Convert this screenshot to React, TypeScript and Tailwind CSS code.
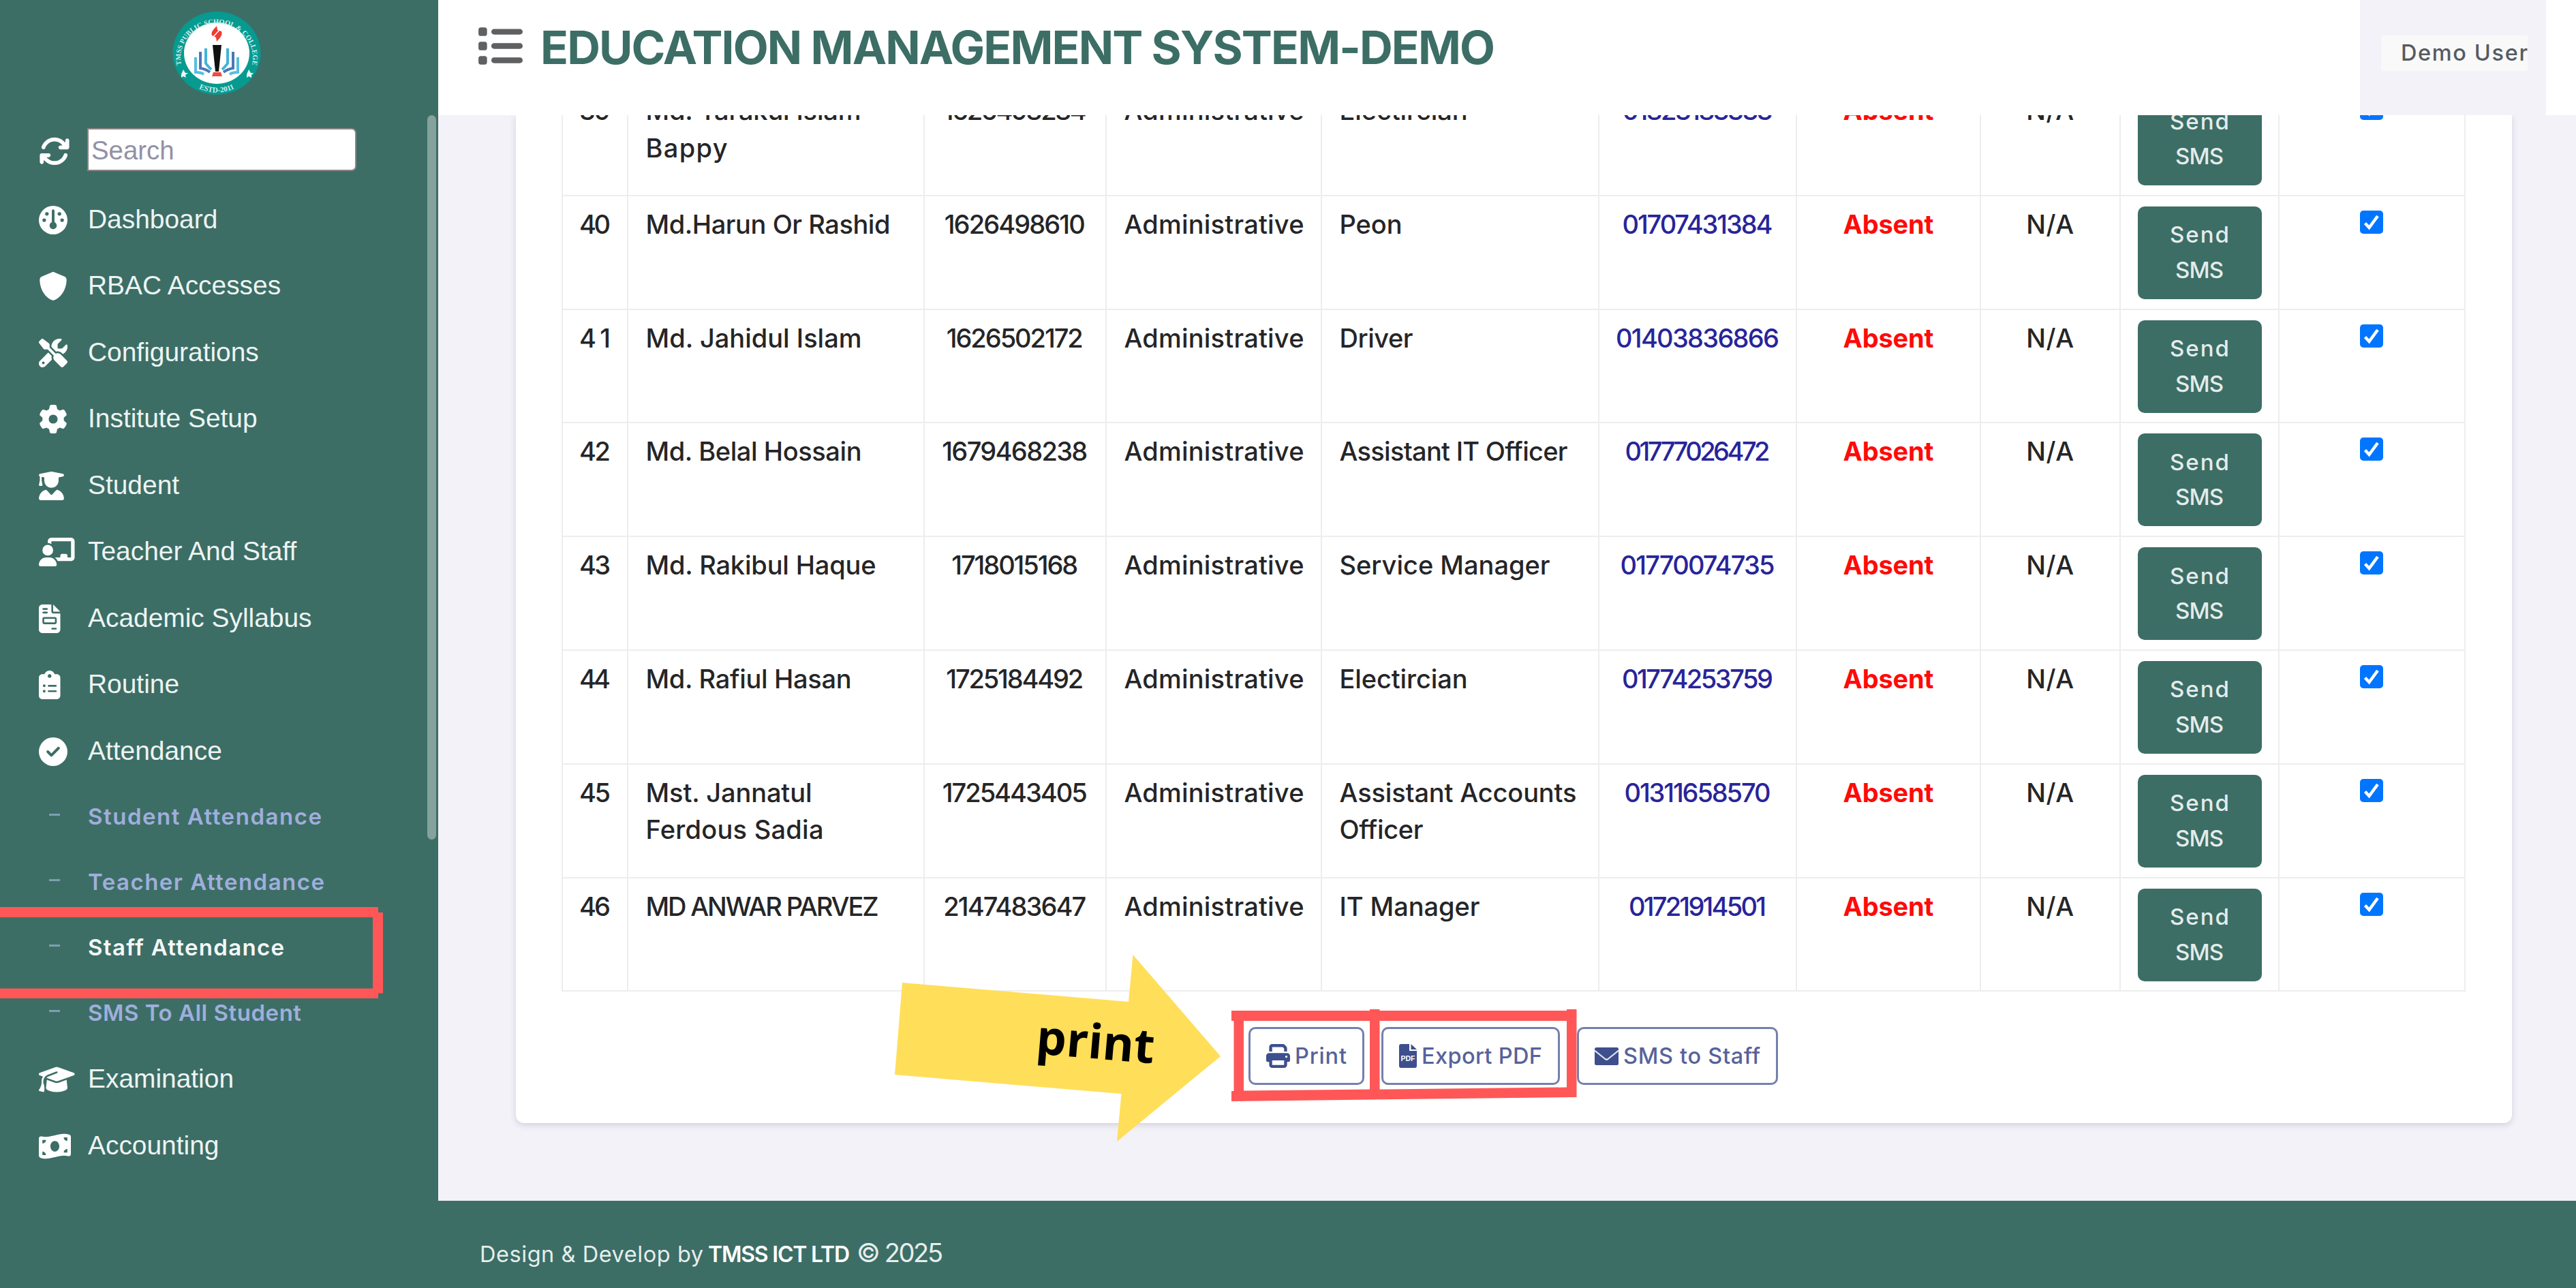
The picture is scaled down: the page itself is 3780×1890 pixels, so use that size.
import { useLayoutEffect, useRef, type ReactNode } from "react";
import {
  FaArrowsRotate,
  FaChalkboardUser,
  FaCircleCheck,
  FaClipboardList,
  FaFileInvoice,
  FaGauge,
  FaGear,
  FaGraduationCap,
  FaList,
  FaMoneyBillWave,
  FaPrint,
  FaScrewdriverWrench,
  FaShield,
  FaUserGraduate,
} from "react-icons/fa6";
import type { IconType } from "react-icons";

/** One line of text whose tracking is adjusted so that it spans `w` pixels. */
function Fit({ w, children, className = "" }: { w: number; children: string; className?: string }) {
  const ref = useRef<HTMLSpanElement>(null);
  useLayoutEffect(() => {
    const el = ref.current;
    if (!el) return;
    el.style.letterSpacing = "0px";
    el.style.marginRight = "0px";
    const gap = (w - el.getBoundingClientRect().width) / Math.max(1, children.length - 1);
    el.style.letterSpacing = `${gap}px`;
    el.style.marginRight = `${-gap}px`;
  }, [w, children]);
  return (
    <span ref={ref} className={`inline-block whitespace-pre ${className}`}>
      {children}
    </span>
  );
}

type Line = [text: string, width: number];

type Staff = {
  no: string;
  name: Line[];
  id: Line;
  role: Line[];
  phone: Line;
};

const STAFF: Staff[] = [
  { no: "39", name: [["Md. Tarakul Islam", 316], ["Bappy", 120]], id: ["1626498284", 211], role: [["Electircian", 188]], phone: ["01823183333", 221] },
  { no: "40", name: [["Md.Harun Or Rashid", 359]], id: ["1626498610", 207], role: [["Peon", 92]], phone: ["01707431384", 221] },
  { no: "41", name: [["Md. Jahidul Islam", 317]], id: ["1626502172", 201], role: [["Driver", 108]], phone: ["01403836866", 240] },
  { no: "42", name: [["Md. Belal Hossain", 317]], id: ["1679468238", 214], role: [["Assistant IT Officer", 335]], phone: ["01777026472", 213] },
  { no: "43", name: [["Md. Rakibul Haque", 338]], id: ["1718015168", 186], role: [["Service Manager", 309]], phone: ["01770074735", 227] },
  { no: "44", name: [["Md. Rafiul Hasan", 302]], id: ["1725184492", 202], role: [["Electircian", 188]], phone: ["01774253759", 222] },
  { no: "45", name: [["Mst. Jannatul", 244], ["Ferdous Sadia", 261]], id: ["1725443405", 213], role: [["Assistant Accounts", 348], ["Officer", 123]], phone: ["01311658570", 215] },
  { no: "46", name: [["MD ANWAR PARVEZ", 342]], id: ["2147483647", 210], role: [["IT Manager", 206]], phone: ["01721914501", 202] },
];

type Item = { icon: IconType; label: string; size: string };

const SQUARE = "h-[42px] w-[42px]";

const MENU: Item[] = [
  { icon: FaGauge, label: "Dashboard", size: SQUARE },
  { icon: FaShield, label: "RBAC Accesses", size: SQUARE },
  { icon: FaScrewdriverWrench, label: "Configurations", size: SQUARE },
  { icon: FaGear, label: "Institute Setup", size: SQUARE },
  { icon: FaUserGraduate, label: "Student", size: "h-[42px] w-[37px]" },
  { icon: FaChalkboardUser, label: "Teacher And Staff", size: "h-[42px] w-[52.500px]" },
  { icon: FaFileInvoice, label: "Academic Syllabus", size: "h-[42px] w-[31.500px]" },
  { icon: FaClipboardList, label: "Routine", size: "h-[42px] w-[31.500px]" },
  { icon: FaCircleCheck, label: "Attendance", size: SQUARE },
];

const SUBMENU: [string, number, boolean][] = [
  ["Student Attendance", 343, false],
  ["Teacher Attendance", 347, false],
  ["Staff Attendance", 288, true],
  ["SMS To All Student", 313, false],
];

const MENU_END: Item[] = [
  { icon: FaGraduationCap, label: "Examination", size: "h-[42px] w-[52.500px]" },
  { icon: FaMoneyBillWave, label: "Accounting", size: "h-[42px] w-[47px]" },
];

function Logo() {
  return (
    <svg viewBox="0 0 130 122" className="h-[122px] w-[130px]" aria-label="Public School & College">
      <defs>
        <path id="ringTop" d="M 15 84 A 53 49.5 0 1 1 115 84" />
        <path id="ringBottom" d="M 22 101 A 59 56 0 0 0 108 101" />
      </defs>
      <ellipse cx="65" cy="61" rx="64.500" ry="61" fill="#079a90" />
      <ellipse cx="65" cy="61" rx="48" ry="45" fill="#fff" />
      <text fill="#d5f0ec" fontFamily="Liberation Serif" fontSize="10.4" fontWeight="700">
        <textPath href="#ringTop" startOffset="50%" textAnchor="middle">TMSS PUBLIC SCHOOL &amp; COLLEGE</textPath>
      </text>
      <text fill="#d5f0ec" fontFamily="Liberation Serif" fontSize="11" fontWeight="700">
        <textPath href="#ringBottom" startOffset="50%" textAnchor="middle">ESTD-2011</textPath>
      </text>
      <path d="M16 85l3 5 4 0-4 3 1 4-4-2-3 2 0-5z M112 85l3 5 4 0-3 3 0 4-4-2-3 2 0-5z" fill="#e8f7f5" />
      <path d="M65 21l1 6 6 2c2 6-2 9-7 15l-1-6-6-3c-2-6 3-9 7-14z" fill="#ee3b36" />
      <path d="M60 37l9-10" stroke="#fff" strokeWidth="1.500" />
      <g fill="none" strokeWidth="4">
        <path d="M34 67v22c6 0 9 1 12 3M96 67v22c-6 0-9 1-12 3" stroke="#56bfdf" />
        <path d="M41 59v24c6 1 10 3 14 6M89 59v24c-6 1-10 3-14 6" stroke="#4a78b5" />
        <path d="M49 54v22c2 3 5 6 8 9M81 54v22c-2 3-5 6-8 9" stroke="#42b4d8" />
      </g>
      <path d="M59 49h13l-4 39h-5z" fill="#111" />
      <path d="M60 89h11l2 6H58z" fill="#ee4b45" />
    </svg>
  );
}

function MenuItem({ icon: Icon, label, size }: Item) {
  return (
    <li className="flex h-[97.5px] items-center pl-[57px]">
      <span className="flex w-[72px] shrink-0 pt-[2px]">
        <Icon className={`${size} text-white`} />
      </span>
      <span className="font-['Liberation_Sans',sans-serif] text-[38.900px] text-[#eef4f2]">{label}</span>
    </li>
  );
}

function Sidebar() {
  return (
    <aside className="flex h-[1890px] w-[643px] shrink-0 flex-col bg-[#3c6e66]">
      <div className="flex h-[169px] shrink-0 justify-center pr-[7px] pt-[17px]">
        <Logo />
      </div>
      <div className="flex h-[1063px] justify-between">
        <div>
          <div className="mt-[19px] flex h-[63px] items-center pl-[57px]">
            <FaArrowsRotate className="mt-[4px] h-[46px] w-[46px] text-white" />
            <div className="ml-[25px] flex h-[63px] w-[395px] items-center rounded-r-[7px] border-2 border-[#8d8585] bg-white pl-[4px] pt-[3px] font-['Liberation_Sans',sans-serif] text-[38.4px] leading-none text-[#9291a5]">
              Search
            </div>
          </div>
          <ul className="mt-[22px]">
            {MENU.map((item) => (
              <MenuItem key={item.label} {...item} />
            ))}
            {SUBMENU.map(([label, w, active]) => (
              <li key={label} className="flex h-[96px] items-center pl-[72px]">
                <span className="mb-[6px] mr-[41px] h-[3px] w-[16px] bg-[#7f9fb0]" />
                <Fit w={w} className={active ? "text-[33px] font-semibold text-[#f4f8f7]" : "text-[33px] font-semibold text-[#a0aedb]"}>
                  {label}
                </Fit>
              </li>
            ))}
            {MENU_END.map((item) => (
              <MenuItem key={item.label} {...item} />
            ))}
          </ul>
        </div>
        <div className="mr-[3px] h-[1063px] w-[13px] rounded-full bg-[#85a29c]" />
      </div>
    </aside>
  );
}

function Header() {
  return (
    <header className="flex h-[169px] w-full shrink-0 items-start justify-between bg-white">
      <div className="flex items-center pl-[57px] pt-[27px]">
        <FaList className="mt-[-5px] h-[67px] w-[67px] text-[#5f6062]" />
        <h1 className="ml-[26px] text-[67.500px] font-bold leading-[86px] text-[#3c6e66]">
          <Fit w={1401}>EDUCATION MANAGEMENT SYSTEM-DEMO</Fit>
        </h1>
      </div>
      <div className="mr-[44px] h-[169px] w-[273px] bg-[#f3f2f9] pl-[31px] pt-[52px]">
        <div className="flex h-[52px] w-[215px] items-center bg-[#f9f9f9] pl-[29px] text-[32.500px] font-medium text-[#555b62]">
          <Fit w={186}>Demo User</Fit>
        </div>
      </div>
    </header>
  );
}

function Cell({ children, center = false }: { children: ReactNode; center?: boolean }) {
  return (
    <td
      className={
        center
          ? "h-[166.8px] border-[2.500px] border-[#eceeee] p-0 pt-[14px] text-center align-top"
          : "h-[166.8px] border-[2.500px] border-[#eceeee] p-0 pl-[25.500px] pt-[14px] text-left align-top"
      }
    >
      {children}
    </td>
  );
}

function Lines({ lines }: { lines: Line[] }) {
  return (
    <>
      {lines.map(([text, w]) => (
        <div key={text} className="h-[54.500px]">
          <Fit w={w}>{text}</Fit>
        </div>
      ))}
    </>
  );
}

function StaffTable() {
  return (
    <table className="w-[2792px] table-fixed border-collapse text-[38px] font-medium leading-[54.500px] text-[#252527]">
      <colgroup>
        <col className="w-[96px]" />
        <col className="w-[434.500px]" />
        <col className="w-[267.500px]" />
        <col className="w-[316px]" />
        <col className="w-[407px]" />
        <col className="w-[290px]" />
        <col className="w-[270px]" />
        <col className="w-[204.500px]" />
        <col className="w-[233px]" />
        <col className="w-[273px]" />
      </colgroup>
      <tbody>
        {STAFF.map((s) => (
          <tr key={s.no} className="h-[166.800px]">
            <Cell center>
              <Fit w={46}>{s.no}</Fit>
            </Cell>
            <Cell>
              <Lines lines={s.name} />
            </Cell>
            <Cell center>
              <Fit w={s.id[1]}>{s.id[0]}</Fit>
            </Cell>
            <Cell>
              <Fit w={264}>Administrative</Fit>
            </Cell>
            <Cell>
              <Lines lines={s.role} />
            </Cell>
            <Cell center>
              <Fit w={s.phone[1]} className="text-[#28249a]">
                {s.phone[0]}
              </Fit>
            </Cell>
            <Cell center>
              <Fit w={133} className="font-bold text-[#ff0a0a]">
                Absent
              </Fit>
            </Cell>
            <Cell center>
              <Fit w={70}>N/A</Fit>
            </Cell>
            <Cell center>
              <button className="ml-[25px] mt-[1px] block h-[136px] w-[182px] rounded-[10px] bg-[#3c6e66] text-[33px] font-medium leading-[51.500px] text-[#e3ecea]">
                <Fit w={87}>Send</Fit>
                <br />
                <Fit w={71}>SMS</Fit>
              </button>
            </Cell>
            <Cell center>
              <span className="ml-[118px] mt-[7px] flex h-[34px] w-[34px] items-center justify-center rounded-[5px] bg-[#0075ff]">
                <svg viewBox="0 0 34 34" className="h-[34px] w-[34px]" fill="none" stroke="#fff" strokeWidth="4.500">
                  <path d="M7.500 18.500l6 6.500L26 8" />
                </svg>
              </span>
            </Cell>
          </tr>
        ))}
      </tbody>
    </table>
  );
}

function PdfIcon() {
  return (
    <svg viewBox="0 0 26 35" className="h-[35px] w-[26px]">
      <path d="M3 0H15V10H26V32Q26 35 23 35H3Q0 35 0 32V3Q0 0 3 0zM17.500 0L26 8H17.500z" fill="#3e4f8d" />
      <text x="13" y="25" textAnchor="middle" fontFamily="Liberation Sans" fontSize="10.500" fontWeight="700" fill="#fff">
        PDF
      </text>
    </svg>
  );
}

function EnvelopeIcon() {
  return (
    <svg viewBox="0 0 35 26" className="h-[26px] w-[35px]">
      <rect width="35" height="26" rx="2.500" fill="#3e4f8d" />
      <path d="M0 4.500L15.500 17Q17.500 18.500 19.500 17L35 4.500" fill="none" stroke="#dfe3f1" strokeWidth="2.200" />
    </svg>
  );
}

function ActionButton({ icon, label, w }: { icon: ReactNode; label: string; w: number }) {
  return (
    <button className="flex h-[85px] items-center rounded-[10px] border-[3px] border-[#7580ad] px-[23px] text-[32.500px] font-medium text-[#56639a]">
      {icon}
      <Fit w={w} className="ml-[7px]">
        {label}
      </Fit>
    </button>
  );
}

/** Red frames and the arrow that point at the print and export actions. */
function Annotations() {
  return (
    <svg viewBox="0 0 3780 1890" className="pointer-events-none absolute left-0 top-0 h-[1890px] w-[3780px]">
      <g fill="#ff5757">
        <path d="M0 1331H555V1339H562V1457.500H555V1465H0V1450.500H547V1346H0z" />
        <path d="M1807 1483H2010V1481H2024.500V1483H2299V1481H2313.500V1610L1807 1616V1601H1810.500V1498H1807zM1825 1498V1600.500L2010 1598.500V1498zM2024.500 1498V1598.500L2299 1595.500V1498z" fillRule="evenodd" />
      </g>
      <path d="M1324 1442L1656 1470L1662.500 1401L1791 1550L1639 1675L1645.500 1605L1313 1577z" fill="#ffde59" />
      <text
        transform="translate(1519 1546) rotate(4.800)"
        fontFamily="Open Sans"
        fontSize="70"
        fontWeight="700"
        textLength="174"
        fill="#000"
      >
        print
      </text>
    </svg>
  );
}

export default function App() {
  return (
    <div className="relative flex h-[1890px] w-[3780px] overflow-hidden bg-[#f3f2f9] font-['Inter',sans-serif]">
      <Sidebar />
      <div className="flex min-w-0 flex-1 flex-col">
        <Header />
        <main className="h-[1593px] overflow-hidden">
          <section className="ml-[114px] h-[1479px] w-[2929px] overflow-hidden rounded-b-[12px] bg-white shadow-[0_3px_10px_rgba(60,60,90,0.18)]">
            <div className="-mt-[50px] pl-[67px]">
              <StaffTable />
            </div>
            <div className="mt-[52px] flex gap-[25px] pl-[1075px]">
              <ActionButton icon={<FaPrint className="h-[35px] w-[35px] text-[#3e4f8d]" />} label="Print" w={76} />
              <ActionButton icon={<PdfIcon />} label="Export PDF" w={177} />
              <ActionButton icon={<EnvelopeIcon />} label="SMS to Staff" w={201} />
            </div>
          </section>
        </main>
        <footer className="flex h-[128px] items-baseline bg-[#3c6e66] pl-[61px] pt-[57px] text-[32.500px] leading-none text-[#e6eeec]">
          <Fit w={328}>Design &amp; Develop by</Fit>
          <Fit w={208} className="ml-[7px] text-[32px] font-semibold text-white">
            TMSS ICT LTD
          </Fit>
          <Fit w={127} className="ml-[10px] text-[38px]">
            © 2025
          </Fit>
        </footer>
      </div>
      <Annotations />
    </div>
  );
}
